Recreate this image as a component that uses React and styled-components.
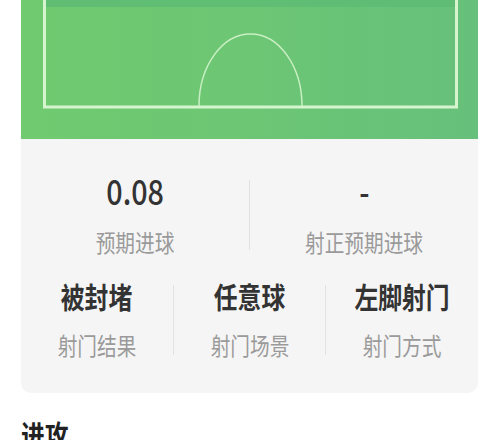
import React from 'react';
import styled, { createGlobalStyle } from 'styled-components';

const GlobalStyle = createGlobalStyle`
    body {
        margin: 0;
        background: #ffffff;
        font-family: "Noto Sans CJK SC", "Noto Sans", sans-serif;
    }
`;

const Page = styled.div`
    width: 457px;
    padding: 0 22px 0 21px;
`;

const Pitch = styled.div`
    height: 139px;
    background: linear-gradient(90deg, #70ca6f 0%, #6cc674 50%, #66c07b 100%);
    svg {
        display: block;
    }
`;

const Card = styled.div`
    background: #f5f5f5;
    border-radius: 0 0 10px 10px;
    padding: 33px 0 33px;
    display: flex;
    flex-direction: column;
    gap: 22px;
`;

const Row = styled.div`
    display: flex;
    align-items: center;
`;

const Stat = styled.div`
    flex: 1;
    display: flex;
    flex-direction: column;
    align-items: center;
    gap: ${(p) => p.$gap}px;
`;

const Divider = styled.div`
    width: 1px;
    height: 70px;
    background: #e2e2e2;
`;

const Squeeze = styled.span`
    display: inline-block;
    transform: scaleX(0.82);
    white-space: nowrap;
`;

const Value = styled.div`
    font-size: 35px;
    line-height: 36px;
    font-weight: 500;
    color: #333333;
`;

const Title = styled.div`
    font-size: 29px;
    line-height: 34px;
    font-weight: 700;
    color: #333333;
`;

const Label = styled.div`
    font-size: 24px;
    line-height: 30px;
    color: #9a9a9a;
`;

const Heading = styled.h2`
    margin: 23px 0 0;
    font-size: 29px;
    line-height: 36px;
    font-weight: 700;
    color: #222222;
    span {
        transform-origin: left center;
    }
`;

const PitchLines = () => (
    <svg width="457" height="139" viewBox="0 0 457 139">
        <rect x="25" y="0" width="409" height="7" fill="#5dba74" opacity="0.8" />
        <path d="M23.5 0 V107 H435.5 V0" fill="none" stroke="#d6f5cf" strokeWidth="3" />
        <path d="M178 106 A51.5 72 0 0 1 281 106" fill="none" stroke="#c9efc3" strokeWidth="1.5" />
    </svg>
);

const topStats = [
    { value: '0.08', label: '预期进球' },
    { value: '-', label: '射正预期进球' },
];

const shotStats = [
    { title: '被封堵', label: '射门结果' },
    { title: '任意球', label: '射门场景' },
    { title: '左脚射门', label: '射门方式' },
];

const App = () => (
    <Page>
        <GlobalStyle />
        <Pitch>
            <PitchLines />
        </Pitch>
        <Card>
            <Row>
                {topStats.map((s, i) => (
                    <React.Fragment key={s.label}>
                        {i > 0 && <Divider />}
                        <Stat $gap={19}>
                            <Value><Squeeze>{s.value}</Squeeze></Value>
                            <Label><Squeeze>{s.label}</Squeeze></Label>
                        </Stat>
                    </React.Fragment>
                ))}
            </Row>
            <Row>
                {shotStats.map((s, i) => (
                    <React.Fragment key={s.label}>
                        {i > 0 && <Divider />}
                        <Stat $gap={17}>
                            <Title><Squeeze>{s.title}</Squeeze></Title>
                            <Label><Squeeze>{s.label}</Squeeze></Label>
                        </Stat>
                    </React.Fragment>
                ))}
            </Row>
        </Card>
        <Heading><Squeeze>进攻</Squeeze></Heading>
    </Page>
);

export default App;
